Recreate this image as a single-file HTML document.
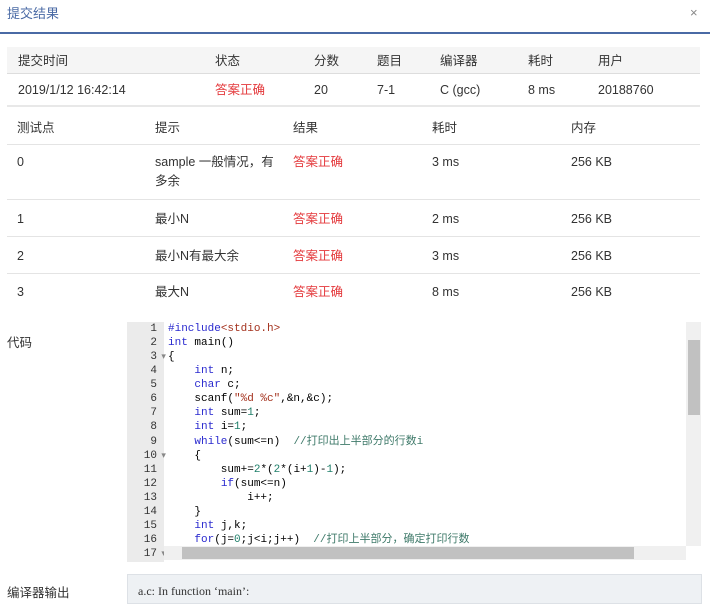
<!DOCTYPE html>
<html><head><meta charset="utf-8"><style>
*{margin:0;padding:0;box-sizing:border-box}
body{width:710px;height:595px;overflow:hidden;background:#fff;font-family:"Liberation Sans","Noto Sans CJK SC",sans-serif;font-size:12.5px;color:#333;position:relative}
.a{position:absolute;white-space:nowrap;line-height:16px}
.red{color:#e4393c}
.code{position:absolute;left:127px;top:322px;width:575px;height:240px;background:#fff;overflow:hidden}
.gut{position:absolute;left:0;top:0;width:37px;height:240px;background:#ebebeb}
.ln{position:absolute;font-family:"Liberation Mono",monospace;font-size:11px;color:#333;white-space:pre}
.cl{position:absolute;left:41px;font-family:"Liberation Mono","Noto Sans CJK SC",monospace;font-size:11px;white-space:pre;color:#000}
.k{color:#2a2acf}.s{color:#a4321e}.n{color:#1f7f6a}.c{color:#3f7a6a}
</style></head><body>
<div class="a" style="left:7px;top:6px;font-size:13px;color:#4a6aa5">提交结果</div>
<div class="a" style="left:690px;top:5px;font-size:13px;color:#888">×</div>
<div class="a" style="left:0;top:32px;width:710px;height:2px;background:#4a6aa5"></div>

<div class="a" style="left:7px;top:47px;width:693px;height:27px;background:#f5f5f5;border-bottom:1px solid #ddd"></div>
<div class="a" style="left:7px;top:105px;width:693px;height:2px;background:#e8e8e8"></div>
<div class="a" style="left:18px;top:53px">提交时间</div>
<div class="a" style="left:215px;top:53px">状态</div>
<div class="a" style="left:314px;top:53px">分数</div>
<div class="a" style="left:377px;top:53px">题目</div>
<div class="a" style="left:440px;top:53px">编译器</div>
<div class="a" style="left:528px;top:53px">耗时</div>
<div class="a" style="left:598px;top:53px">用户</div>
<div class="a" style="left:18px;top:82px">2019/1/12 16:42:14</div>
<div class="a red" style="left:215px;top:82px">答案正确</div>
<div class="a" style="left:314px;top:82px">20</div>
<div class="a" style="left:377px;top:82px">7-1</div>
<div class="a" style="left:440px;top:82px">C (gcc)</div>
<div class="a" style="left:528px;top:82px">8 ms</div>
<div class="a" style="left:598px;top:82px">20188760</div>

<div class="a" style="left:17px;top:120px">测试点</div>
<div class="a" style="left:155px;top:120px">提示</div>
<div class="a" style="left:293px;top:120px">结果</div>
<div class="a" style="left:432px;top:120px">耗时</div>
<div class="a" style="left:571px;top:120px">内存</div>
<div class="a" style="left:7px;top:144px;width:693px;height:1px;background:#e4e4e4"></div>
<div class="a" style="left:17px;top:154px">0</div>
<div class="a" style="left:155px;top:154px">sample 一般情况，有</div>
<div class="a" style="left:155px;top:173px">多余</div>
<div class="a red" style="left:293px;top:154px">答案正确</div>
<div class="a" style="left:432px;top:154px">3 ms</div>
<div class="a" style="left:571px;top:154px">256 KB</div>
<div class="a" style="left:7px;top:199px;width:693px;height:1px;background:#e4e4e4"></div>
<div class="a" style="left:17px;top:211px">1</div>
<div class="a" style="left:155px;top:211px">最小N</div>
<div class="a red" style="left:293px;top:211px">答案正确</div>
<div class="a" style="left:432px;top:211px">2 ms</div>
<div class="a" style="left:571px;top:211px">256 KB</div>
<div class="a" style="left:7px;top:236px;width:693px;height:1px;background:#e4e4e4"></div>
<div class="a" style="left:17px;top:248px">2</div>
<div class="a" style="left:155px;top:248px">最小N有最大余</div>
<div class="a red" style="left:293px;top:248px">答案正确</div>
<div class="a" style="left:432px;top:248px">3 ms</div>
<div class="a" style="left:571px;top:248px">256 KB</div>
<div class="a" style="left:7px;top:273px;width:693px;height:1px;background:#e4e4e4"></div>
<div class="a" style="left:17px;top:284px">3</div>
<div class="a" style="left:155px;top:284px">最大N</div>
<div class="a red" style="left:293px;top:284px">答案正确</div>
<div class="a" style="left:432px;top:284px">8 ms</div>
<div class="a" style="left:571px;top:284px">256 KB</div>

<div class="a" style="left:7px;top:335px">代码</div>
<div class="code">
<div class="gut"></div>
<div class="ln" style="left:0;top:0;width:30px;text-align:right;line-height:14.07px"> 1
 2
 3
 4
 5
 6
 7
 8
 9
10
11
12
13
14
15
16
17</div>
<div class="ln" style="left:29px;top:0;line-height:14.07px;color:#888;font-size:9px">

 ▾






 ▾






 ▾</div>
<div class="cl" style="top:0;line-height:14.07px"><span class="k">#include</span><span class="s">&lt;stdio.h&gt;</span>
<span class="k">int</span> main()
{
    <span class="k">int</span> n;
    <span class="k">char</span> c;
    scanf(<span class="s">"%d %c"</span>,&amp;n,&amp;c);
    <span class="k">int</span> sum=<span class="n">1</span>;
    <span class="k">int</span> i=<span class="n">1</span>;
    <span class="k">while</span>(sum&lt;=n)  <span class="c">//打印出上半部分的行数i</span>
    {
        sum+=<span class="n">2</span>*(<span class="n">2</span>*(i+<span class="n">1</span>)-<span class="n">1</span>);
        <span class="k">if</span>(sum&lt;=n)
            i++;
    }
    <span class="k">int</span> j,k;
    <span class="k">for</span>(j=<span class="n">0</span>;j&lt;i;j++)  <span class="c">//打印上半部分，确定打印行数</span></div>
<div class="a" style="left:37px;top:224px;width:522px;height:14px;background:#f0f0f0"></div>
<div class="a" style="left:55px;top:225px;width:452px;height:12px;background:#c1c1c1"></div>
<div class="a" style="left:559px;top:0;width:15px;height:224px;background:#f0f0f0"></div>
<div class="a" style="left:561px;top:18px;width:12px;height:75px;background:#c1c1c1"></div>
</div>

<div class="a" style="left:127px;top:574px;width:575px;height:30px;background:#eef1f4;border:1px solid #dde1e6"></div>
<div class="a" style="left:138px;top:583px;font-family:'Liberation Serif','Noto Serif CJK SC',serif;font-size:12px">a.c: In function ‘main’:</div>
<div class="a" style="left:7px;top:585px">编译器输出</div>
</body></html>
